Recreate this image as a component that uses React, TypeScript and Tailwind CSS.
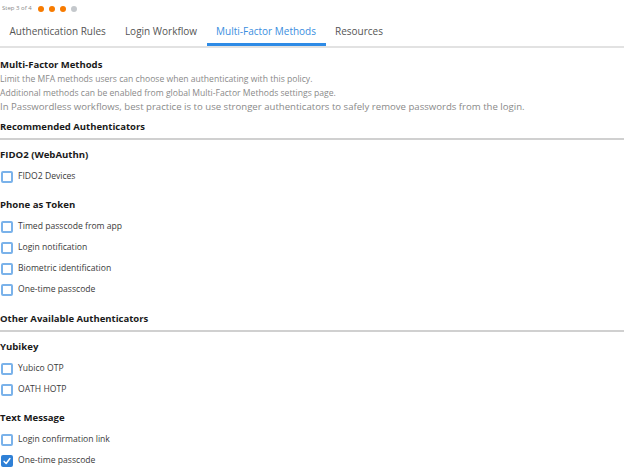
const font = { fontFamily: '"Open Sans", "Liberation Sans", sans-serif' };

const tabs = ['Authentication Rules', 'Login Workflow', 'Multi-Factor Methods', 'Resources'];

function Checkbox({ checked }: { checked?: boolean }) {
  if (checked) {
    return (
      <span className="flex h-[12px] w-[12px] shrink-0 items-center justify-center rounded-[2px] bg-[#2f80d6]">
        <svg viewBox="0 0 12 12" className="h-[10px] w-[10px]" fill="none" stroke="white" strokeWidth={1.8} strokeLinecap="round" strokeLinejoin="round">
          <path d="M2.5 6.5 5 9l4.5-6" />
        </svg>
      </span>
    );
  }
  return <span className="h-[12px] w-[12px] shrink-0 rounded-[2px] border-2 border-[#7ab2ea] bg-white" />;
}

function Option({ label, checked }: { label: string; checked?: boolean }) {
  return (
    <div className="flex h-[21px] items-center gap-[5px] pl-px">
      <Checkbox checked={checked} />
      <span className="text-[8.6px] text-[#3a3a3a]">{label}</span>
    </div>
  );
}

function Group({ title, options }: { title: string; options: { label: string; checked?: boolean }[] }) {
  return (
    <div className="mb-[8px]">
      <div className="flex h-[21px] items-center text-[9.6px] font-bold text-[#1a1a1a]">{title}</div>
      {options.map((o) => (
        <Option key={o.label} {...o} />
      ))}
    </div>
  );
}

function SectionHeading({ title }: { title: string }) {
  return (
    <div className="mb-[5px] flex h-[24px] items-center border-b-2 border-[#d0d0d0] text-[9.5px] font-bold text-[#1a1a1a]">
      {title}
    </div>
  );
}

export default function App() {
  return (
    <div className="h-[471px] w-[624px] overflow-hidden bg-white" style={font}>
      <div className="flex h-[17px] items-center gap-[5px] pl-[2px] text-[6px] text-[#888]">
        <span className="mr-px">Step 3 of 4</span>
        <span className="h-[6px] w-[6px] rounded-full bg-[#f77b00]" />
        <span className="h-[6px] w-[6px] rounded-full bg-[#f77b00]" />
        <span className="h-[6px] w-[6px] rounded-full bg-[#f77b00]" />
        <span className="h-[6px] w-[6px] rounded-full bg-[#c4c8cc]" />
      </div>
      <div className="flex h-[31px] items-stretch border-b-2 border-[#e2e2e2]">
        {tabs.map((t) => {
          const active = t === 'Multi-Factor Methods';
          return (
            <div
              key={t}
              className={
                active
                  ? 'flex items-center border-b-[3px] border-[#2e8be6] px-[9.5px] pt-[3px] text-[10px] text-[#3a8ee0]'
                  : 'flex items-center border-b-[3px] border-transparent px-[9.5px] pt-[3px] text-[10px] text-[#555]'
              }
            >
              {t}
            </div>
          );
        })}
      </div>

      <div className="pt-[9px] pb-[3px]">
        <div className="text-[9.5px] font-bold leading-[15px] text-[#1a1a1a]">Multi-Factor Methods</div>
        <div className="text-[8.6px] leading-[14px] text-[#8a8a8a]">
          Limit the MFA methods users can choose when authenticating with this policy.
        </div>
        <div className="text-[8.6px] leading-[14px] text-[#8a8a8a]">
          Additional methods can be enabled from global Multi-Factor Methods settings page.
        </div>
        <div className="text-[9.6px] leading-[13px] text-[#8a8a8a]">
          In Passwordless workflows, best practice is to use stronger authenticators to safely remove passwords from the login.
        </div>
      </div>

      <SectionHeading title="Recommended Authenticators" />
      <Group title="FIDO2 (WebAuthn)" options={[{ label: 'FIDO2 Devices' }]} />
      <Group
        title="Phone as Token"
        options={[
          { label: 'Timed passcode from app' },
          { label: 'Login notification' },
          { label: 'Biometric identification' },
          { label: 'One-time passcode' },
        ]}
      />
      <SectionHeading title="Other Available Authenticators" />
      <Group title="Yubikey" options={[{ label: 'Yubico OTP' }, { label: 'OATH HOTP' }]} />
      <Group
        title="Text Message"
        options={[{ label: 'Login confirmation link' }, { label: 'One-time passcode', checked: true }]}
      />
    </div>
  );
}
